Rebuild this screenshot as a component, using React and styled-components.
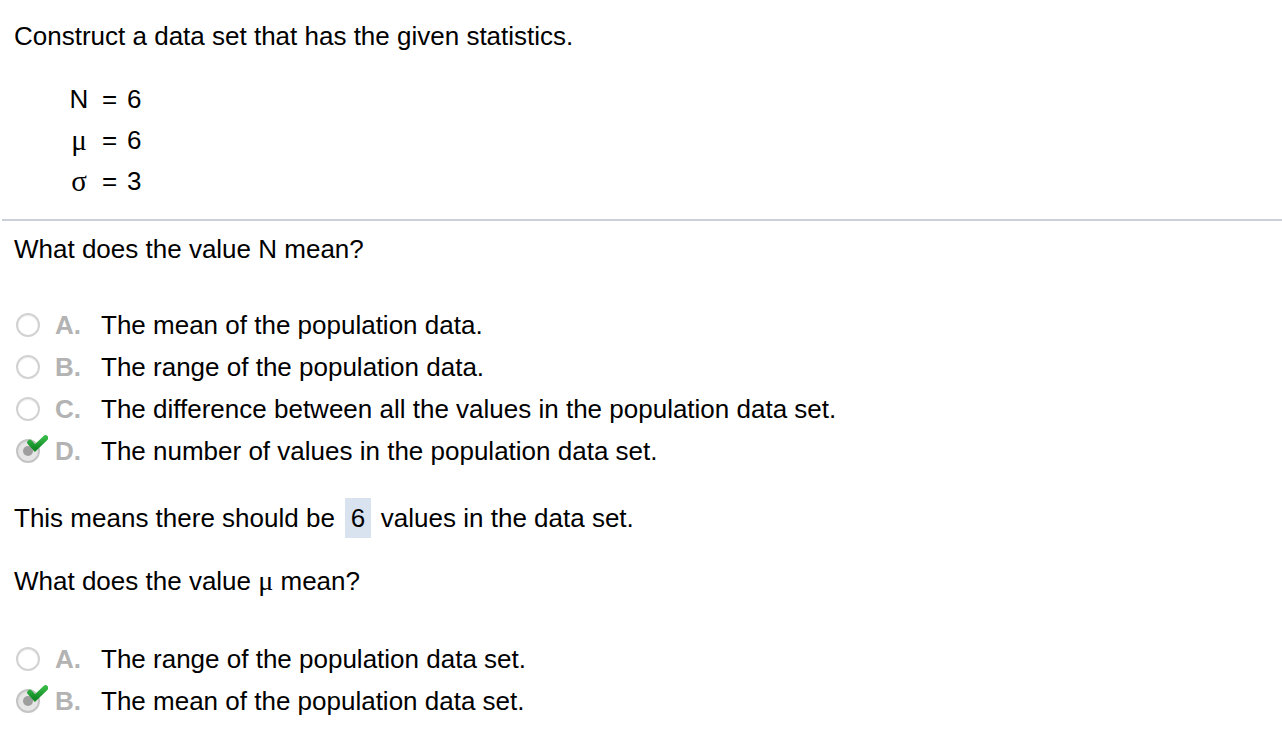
import React from "react";
import styled, { createGlobalStyle } from "styled-components";

const Global = createGlobalStyle`
  html, body {
    margin: 0;
    padding: 0;
    background: #fff;
  }
  body {
    font-family: "Liberation Sans", Arial, sans-serif;
    font-size: 26px;
    color: #000;
  }
`;

const Page = styled.div`
  width: 1282px;
  padding-top: 21px;
`;

const Intro = styled.div`
  padding-left: 14px;
`;

const Line = styled.div`
  line-height: 30px;
  height: 30px;
  margin-top: ${(p) => p.top || 0}px;
  white-space: nowrap;
`;

const Stats = styled.div`
  margin-top: 28px;
  padding-left: 69px;
  padding-bottom: 17px;
`;

const StatRow = styled.div`
  display: flex;
  align-items: center;
  height: 41px;
`;

const Sym = styled.span`
  width: 20px;
  text-align: center;
  font-family: ${(p) => (p.greek ? '"Liberation Serif", serif' : "inherit")};
  font-size: ${(p) => (p.greek ? "29px" : "inherit")};
`;

const Eq = styled.span`
  width: 15px;
  margin-left: 13px;
  text-align: center;
`;

const Val = styled.span`
  margin-left: 10px;
`;

const Divider = styled.hr`
  border: 0;
  height: 2px;
  margin: 0 0 0 2px;
  background: #cbcfd8;
`;

const Section = styled.div`
  padding-left: 14px;
  padding-top: 13px;
`;

const Greek = styled.span`
  font-family: "Liberation Serif", serif;
  font-size: 28px;
`;

const Options = styled.div`
  margin-top: ${(p) => p.top}px;
  margin-left: 1px;
`;

const Option = styled.div`
  display: flex;
  align-items: center;
  height: 42px;
  white-space: nowrap;
`;

const RadioBox = styled.span`
  position: relative;
  width: 26px;
  height: 26px;
  flex: none;
  display: flex;
  align-items: center;
  justify-content: center;
`;

const Ring = styled.span`
  width: 20px;
  height: 20px;
  border-radius: 50%;
  border: 2px solid ${(p) => (p.checked ? "#c4c4c4" : "#d2d2d2")};
  background: ${(p) => (p.checked ? "#e6e6e6" : "#fff")};
  box-shadow: inset 0 1px 1px rgba(0, 0, 0, 0.08);
  display: flex;
  align-items: center;
  justify-content: center;
`;

const Dot = styled.span`
  width: 10px;
  height: 10px;
  border-radius: 50%;
  background: #9e9e9e;
`;

const Check = styled.svg`
  position: absolute;
  left: 12px;
  top: -3px;
`;

const Letter = styled.span`
  font-weight: bold;
  color: #b3b3b3;
  width: 46px;
  margin-left: 14px;
`;

const Answer = styled.span`
  line-height: 30px;
`;

const Fill = styled.span`
  display: inline-block;
  width: 26px;
  height: 40px;
  line-height: 40px;
  text-align: center;
  background: #d9e2ef;
  margin: 0 10px;
`;

const Sentence = styled.div`
  margin-top: 26px;
  height: 40px;
  line-height: 40px;
  display: flex;
  align-items: center;
  white-space: nowrap;
`;

function Radio({ checked }) {
  return (
    <RadioBox>
      <Ring checked={checked}>{checked && <Dot />}</Ring>
      {checked && (
        <Check width="21" height="17" viewBox="0 0 21 17">
          <defs>
            <linearGradient id="g" x1="0" y1="0" x2="0" y2="1">
              <stop offset="0" stopColor="#35b845" />
              <stop offset="1" stopColor="#118a26" />
            </linearGradient>
          </defs>
          <path
            d="M3 7.5 L8 13 L18.5 3"
            fill="none"
            stroke="url(#g)"
            strokeWidth="5.5"
            strokeLinejoin="miter"
            strokeLinecap="round"
          />
        </Check>
      )}
    </RadioBox>
  );
}

function Choice({ letter, checked, children }) {
  return (
    <Option>
      <Radio checked={checked} />
      <Letter>{letter}.</Letter>
      <Answer>{children}</Answer>
    </Option>
  );
}

export default function App() {
  return (
    <Page>
      <Global />
      <Intro>
        <Line>Construct a data set that has the given statistics.</Line>
      </Intro>
      <Stats>
        <StatRow>
          <Sym>N</Sym>
          <Eq>=</Eq>
          <Val>6</Val>
        </StatRow>
        <StatRow>
          <Sym greek>μ</Sym>
          <Eq>=</Eq>
          <Val>6</Val>
        </StatRow>
        <StatRow>
          <Sym greek>σ</Sym>
          <Eq>=</Eq>
          <Val>3</Val>
        </StatRow>
      </Stats>
      <Divider />
      <Section>
        <Line>What does the value N mean?</Line>
        <Options top={40}>
          <Choice letter="A">The mean of the population data.</Choice>
          <Choice letter="B">The range of the population data.</Choice>
          <Choice letter="C">
            The difference between all the values in the population data set.
          </Choice>
          <Choice letter="D" checked>
            The number of values in the population data set.
          </Choice>
        </Options>
        <Sentence>
          This means there should be<Fill>6</Fill>values in the data set.
        </Sentence>
        <Line top={28}>
          What does the value <Greek>μ</Greek> mean?
        </Line>
        <Options top={42}>
          <Choice letter="A">The range of the population data set.</Choice>
          <Choice letter="B" checked>
            The mean of the population data set.
          </Choice>
        </Options>
      </Section>
    </Page>
  );
}
